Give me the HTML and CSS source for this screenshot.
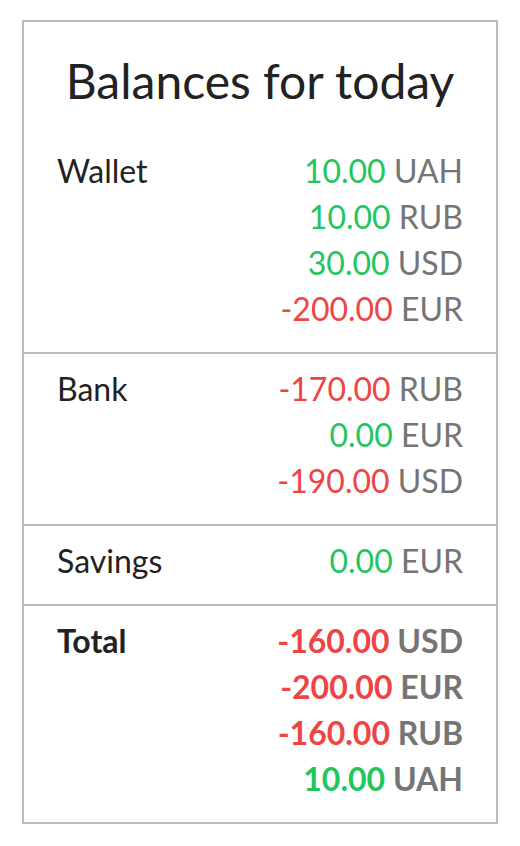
FILE: index.html
```html
<!DOCTYPE html>
<html lang="en">
<head>
    <meta charset="UTF-8">
    <meta name="viewport" content="width=device-width, initial-scale=1.0">
    <title>Balances for today</title>
    <link rel="stylesheet" href="styles.css">
</head>
<body>

    <div class="balances">
        <h1>Balances for today</h1>

        <div class="account">
            <div class="name">Wallet</div>
            <div class="amounts">
                <div><span class="plus">10.00</span> <span class="cur">UAH</span></div>
                <div><span class="plus">10.00</span> <span class="cur">RUB</span></div>
                <div><span class="plus">30.00</span> <span class="cur">USD</span></div>
                <div><span class="minus">-200.00</span> <span class="cur">EUR</span></div>
            </div>
        </div>

        <div class="account">
            <div class="name">Bank</div>
            <div class="amounts">
                <div><span class="minus">-170.00</span> <span class="cur">RUB</span></div>
                <div><span class="plus">0.00</span> <span class="cur">EUR</span></div>
                <div><span class="minus">-190.00</span> <span class="cur">USD</span></div>
            </div>
        </div>

        <div class="account">
            <div class="name">Savings</div>
            <div class="amounts">
                <div><span class="plus">0.00</span> <span class="cur">EUR</span></div>
            </div>
        </div>

        <div class="account total">
            <div class="name">Total</div>
            <div class="amounts">
                <div><span class="minus">-160.00</span> <span class="cur">USD</span></div>
                <div><span class="minus">-200.00</span> <span class="cur">EUR</span></div>
                <div><span class="minus">-160.00</span> <span class="cur">RUB</span></div>
                <div><span class="plus">10.00</span> <span class="cur">UAH</span></div>
            </div>
        </div>
    </div>

</body>
</html>
```

FILE: styles.css
```css
/* Page */
body {
    font-family: Lato, "Open Sans", sans-serif;
    margin: 0;
    padding: 20px 22px;
    background: #fff;
    color: #222;
}

.balances {
    border: 2px solid #bbb;
}

h1 {
    font-size: 48px;
    font-weight: 400;
    text-align: center;
    margin: 0;
    padding: 30px 0 26px;
    line-height: 1.2;
}

/* Accounts */
.account {
    display: flex;
    justify-content: space-between;
    padding: 12px 33px 20px;
    font-size: 32px;
    line-height: 46px;
}

    .account + .account {
        border-top: 2px solid #bbb;
    }

.amounts {
    text-align: right;
}

.plus {
    color: #22c55e;
}

.minus {
    color: #ef4444;
}

.cur {
    color: #757575;
}

.total {
    font-weight: bold;
}
```
